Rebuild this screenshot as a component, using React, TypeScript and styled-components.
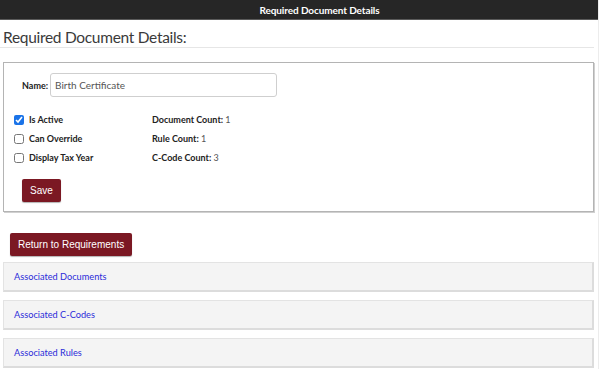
import React from 'react';
import styled, {createGlobalStyle} from "styled-components";

const GlobalStyle = createGlobalStyle`
    html, body {
        margin: 0;
        padding: 0;
        background: #ffffff;
    }
    body {
        font-family: 'Lato', 'Noto Sans', sans-serif;
        color: #333;
    }
`;

const PageWrapper = styled.div`
    width: 599px;
    min-height: 369px;
    box-sizing: border-box;
    border-right: 1px solid #ececec;
`;

const TopBar = styled.header`
    height: 19px;
    background: #262626;
    border-bottom: 1px solid #5a5a5a;
    display: flex;
    align-items: center;
    justify-content: center;
    padding-left: 41px;
`;

const TopBarTitle = styled.span`
    font-family: 'Lato', sans-serif;
    font-size: 10px;
    font-weight: 700;
    color: #ffffff;
    letter-spacing: -0.1px;
`;

const ContentWrapper = styled.main`
    width: 591px;
    padding-left: 3px;
    display: flex;
    flex-direction: column;
`;

const Title = styled.h1`
    font-family: 'Lato', sans-serif;
    font-size: 15.5px;
    font-weight: 400;
    letter-spacing: -0.3px;
    color: #3a3a3a;
    margin: 7px 0 0 -3px;
    padding: 0 0 0 3px;
    line-height: 20px;
    border-bottom: 1px solid #e6e6e6;
`;

const DetailsBox = styled.section`
    margin-top: 14px;
    border: 1px solid #b4b4b4;
    box-shadow: 1px 1px 0 #d0d0d0;
    padding: 10px 18px 9px 10px;
    display: flex;
    flex-direction: column;
`;

const NameRow = styled.div`
    display: flex;
    align-items: center;
    gap: 2px;
    padding-left: 8px;
`;

const FieldLabel = styled.label`
    font-family: 'Lato', sans-serif;
    font-size: 9px;
    font-weight: 700;
    color: #222;
`;

const TextInput = styled.input`
    width: 227px;
    height: 24px;
    box-sizing: border-box;
    border: 1px solid #cfcfcf;
    border-radius: 3px;
    padding: 0 4px;
    font-family: 'Lato', sans-serif;
    font-size: 10px;
    color: #555;
    outline: none;
`;

const FlagsGrid = styled.div`
    display: grid;
    grid-template-columns: 138px 1fr;
    grid-auto-rows: 19px;
    margin-top: 13px;
    align-items: center;
`;

const CheckRow = styled.label`
    display: flex;
    align-items: center;
    gap: 5px;
    font-family: 'Lato', sans-serif;
    font-size: 9px;
    font-weight: 700;
    color: #222;
`;

const CheckBox = styled.input`
    width: 10px;
    height: 10px;
    margin: 0;
    accent-color: #1a73e8;
`;

const CountText = styled.span`
    font-family: 'Lato', sans-serif;
    font-size: 9px;
    color: #555;

    b {
        color: #222;
        font-weight: 700;
    }
`;

const RedButton = styled.button<{ $inset?: number }>`
    align-self: flex-start;
    height: 23px;
    margin-left: ${p => p.$inset ?? 0}px;
    padding: 0 8px;
    background: #7b1823;
    border: none;
    border-radius: 2px;
    box-shadow: 0 1px 1px rgba(0, 0, 0, 0.3);
    color: #ffffff;
    font-family: 'Liberation Sans', 'Roboto', sans-serif;
    font-size: 10px;
    cursor: pointer;
`;

const SaveButton = styled(RedButton)`
    margin-top: 12px;
`;

const ReturnButton = styled(RedButton)`
    margin-top: 21px;
    margin-bottom: 6px;
`;

const AccordionList = styled.div`
    display: flex;
    flex-direction: column;
    gap: 8px;
`;

const AccordionHeader = styled.div`
    height: 27px;
    background: #f4f4f4;
    border: 1px solid #e3e3e3;
    border-bottom: 2px solid #dcdcdc;
    border-right: 2px solid #dcdcdc;
    display: flex;
    align-items: center;
    padding-left: 10px;
`;

const AccordionLink = styled.a`
    font-family: 'Lato', sans-serif;
    font-size: 9.2px;
    color: #2b2bd9;
    text-decoration: none;
    cursor: pointer;
`;

const flags = [
  {label: "Is Active", checked: true, countLabel: "Document Count:", count: 1},
  {label: "Can Override", checked: false, countLabel: "Rule Count:", count: 1},
  {label: "Display Tax Year", checked: false, countLabel: "C-Code Count:", count: 3},
];

const sections = ["Associated Documents", "Associated C-Codes", "Associated Rules"];

const App = () => {
  return (
    <PageWrapper>
      <GlobalStyle/>
      <TopBar>
        <TopBarTitle>Required Document Details</TopBarTitle>
      </TopBar>
      <ContentWrapper>
        <Title>Required Document Details:</Title>

        <DetailsBox>
          <NameRow>
            <FieldLabel htmlFor="doc-name">Name:</FieldLabel>
            <TextInput id="doc-name" defaultValue="Birth Certificate"/>
          </NameRow>

          <FlagsGrid>
            {flags.map(f => (
              <React.Fragment key={f.label}>
                <CheckRow>
                  <CheckBox type="checkbox" defaultChecked={f.checked}/>
                  {f.label}
                </CheckRow>
                <CountText><b>{f.countLabel}</b> {f.count}</CountText>
              </React.Fragment>
            ))}
          </FlagsGrid>

          <SaveButton $inset={8}>Save</SaveButton>
        </DetailsBox>

        <ReturnButton $inset={7}>Return to Requirements</ReturnButton>

        <AccordionList>
          {sections.map(s => (
            <AccordionHeader key={s}>
              <AccordionLink>{s}</AccordionLink>
            </AccordionHeader>
          ))}
        </AccordionList>
      </ContentWrapper>
    </PageWrapper>
  );
};

export default App;
